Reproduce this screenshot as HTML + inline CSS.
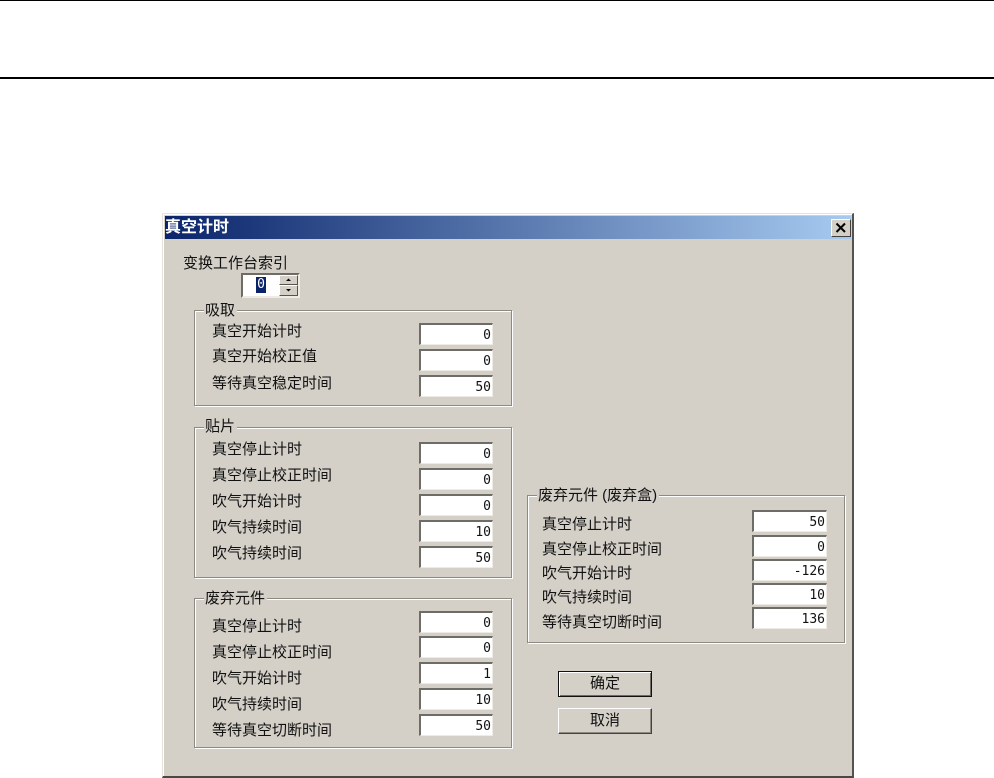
<!DOCTYPE html>
<html><head><meta charset="utf-8"><style>
html,body{margin:0;padding:0;background:#fff}
body{width:994px;height:778px;position:relative;overflow:hidden;font-family:"Liberation Sans","WenQuanYi Zen Hei","Noto Sans CJK SC",sans-serif}
div{position:absolute;box-sizing:border-box}
.l{font-size:15px;line-height:20px;height:20px;margin-top:1px;white-space:nowrap;color:#111;filter:blur(.3px)}
.lg{padding:0 2px 0 1px;background:#D4D0C8}
.g{border:1px solid #8d8a84;box-shadow:1px 1px 0 #fff,inset 1px 1px 0 #fff}
.i{left:0;width:74px;height:22px;background:#fff;border-top:2px solid #6e6c67;border-left:2px solid #6e6c67;border-right:1px solid #eeebe5;border-bottom:1px solid #eeebe5;font-family:"DejaVu Sans Mono","Liberation Mono",monospace;font-size:13px;line-height:21px;text-align:right;padding-right:1px;color:#111}
.b{background:#D4D0C8;text-align:center;font-size:15px;line-height:24px;color:#111}
</style></head><body>
<div style="left:0;top:0;width:994px;height:1px;background:#000"></div>
<div style="left:0;top:77px;width:994px;height:2px;background:#000"></div>

<div id="d" style="left:162px;top:213px;width:692px;height:565px;background:#D4D0C8;border-top:1px solid #e6e3dc;border-left:1px solid #e6e3dc;border-right:2px solid #55534f;border-bottom:2px solid #4a4845;box-shadow:inset 1px 1px 0 #fff"></div>
<div style="left:165px;top:216px;width:686px;height:23px;background:linear-gradient(90deg,#0A246A,#A6CAF0)"></div>
<div style="left:165px;top:217px;font-size:16px;font-weight:bold;line-height:21px;color:#fff;white-space:nowrap">真空计时</div>
<div style="left:831px;top:219px;width:20px;height:18px;background:#D4D0C8;border-top:1px solid #fff;border-left:1px solid #fff;border-right:1px solid #44423f;border-bottom:1px solid #44423f">
<svg width="18" height="16" style="position:absolute;left:0;top:0"><path d="M4.500 3.500L13 12M13 3.500L4.500 12" stroke="#000" stroke-width="2" fill="none"/></svg></div>

<div class="l" style="left:183px;top:253px">变换工作台索引</div>
<div style="left:241px;top:273px;width:59px;height:25px;background:#fff;border-top:2px solid #6e6c67;border-left:2px solid #6e6c67;border-right:2px solid #eeebe5;border-bottom:2px solid #eeebe5"></div>
<div style="left:256px;top:277px;width:10px;height:16px;background:#0A246A;color:#fff;font:13px/16px 'DejaVu Sans Mono',monospace;text-align:center">0</div>
<div style="left:279px;top:275px;width:19px;height:10px;background:#D4D0C8;border-top:1px solid #fff;border-left:1px solid #fff;border-right:1px solid #55534f;border-bottom:1px solid #55534f"><svg width="17" height="8" style="position:absolute;left:0;top:0"><path d="M6 5h5L8.500 2.500z" fill="#000"/></svg></div>
<div style="left:279px;top:285px;width:19px;height:11px;background:#D4D0C8;border-top:1px solid #fff;border-left:1px solid #fff;border-right:1px solid #55534f;border-bottom:1px solid #55534f"><svg width="17" height="9" style="position:absolute;left:0;top:0"><path d="M6 3h5L8.500 5.500z" fill="#000"/></svg></div>

<!-- group 1 -->
<div class="g" style="left:194px;top:310px;width:318px;height:96px"></div>
<div class="l lg" style="left:204px;top:300px">吸取</div>
<div class="l" style="left:212px;top:321px">真空开始计时</div>
<div class="l" style="left:212px;top:346px">真空开始校正值</div>
<div class="l" style="left:212px;top:373px">等待真空稳定时间</div>
<div class="i" style="left:419px;top:323px">0</div>
<div class="i" style="left:419px;top:349px">0</div>
<div class="i" style="left:419px;top:375px">50</div>

<!-- group 2 -->
<div class="g" style="left:194px;top:427px;width:318px;height:151px"></div>
<div class="l lg" style="left:204px;top:416px">贴片</div>
<div class="l" style="left:212px;top:439px">真空停止计时</div>
<div class="l" style="left:212px;top:465px">真空停止校正时间</div>
<div class="l" style="left:212px;top:491px">吹气开始计时</div>
<div class="l" style="left:212px;top:517px">吹气持续时间</div>
<div class="l" style="left:212px;top:543px">吹气持续时间</div>
<div class="i" style="left:419px;top:442px">0</div>
<div class="i" style="left:419px;top:468px">0</div>
<div class="i" style="left:419px;top:494px">0</div>
<div class="i" style="left:419px;top:520px">10</div>
<div class="i" style="left:419px;top:546px">50</div>

<!-- group 3 -->
<div class="g" style="left:194px;top:598px;width:318px;height:150px"></div>
<div class="l lg" style="left:204px;top:588px">废弃元件</div>
<div class="l" style="left:212px;top:616px">真空停止计时</div>
<div class="l" style="left:212px;top:642px">真空停止校正时间</div>
<div class="l" style="left:212px;top:668px">吹气开始计时</div>
<div class="l" style="left:212px;top:694px">吹气持续时间</div>
<div class="l" style="left:212px;top:720px">等待真空切断时间</div>
<div class="i" style="left:419px;top:611px">0</div>
<div class="i" style="left:419px;top:636px">0</div>
<div class="i" style="left:419px;top:662px">1</div>
<div class="i" style="left:419px;top:688px">10</div>
<div class="i" style="left:419px;top:714px">50</div>

<!-- group 4 -->
<div class="g" style="left:527px;top:495px;width:318px;height:148px"></div>
<div class="l lg" style="left:537px;top:485px">废弃元件 (废弃盒)</div>
<div class="l" style="left:542px;top:514px">真空停止计时</div>
<div class="l" style="left:542px;top:539px">真空停止校正时间</div>
<div class="l" style="left:542px;top:563px">吹气开始计时</div>
<div class="l" style="left:542px;top:587px">吹气持续时间</div>
<div class="l" style="left:542px;top:612px">等待真空切断时间</div>
<div class="i" style="left:752px;top:510px;width:75px">50</div>
<div class="i" style="left:752px;top:535px;width:75px">0</div>
<div class="i" style="left:752px;top:559px;width:75px">-126</div>
<div class="i" style="left:752px;top:583px;width:75px">10</div>
<div class="i" style="left:752px;top:607px;width:75px">136</div>

<div class="b" style="left:558px;top:671px;width:94px;height:26px;border:1px solid #111;box-shadow:inset 1px 1px 0 #fff,inset -1px -1px 0 #6e6c67">确定</div>
<div class="b" style="left:558px;top:708px;width:94px;height:26px;border-top:1px solid #fff;border-left:1px solid #fff;border-right:1px solid #44423f;border-bottom:1px solid #44423f;box-shadow:inset -1px -1px 0 #8d8a84">取消</div>
</body></html>
